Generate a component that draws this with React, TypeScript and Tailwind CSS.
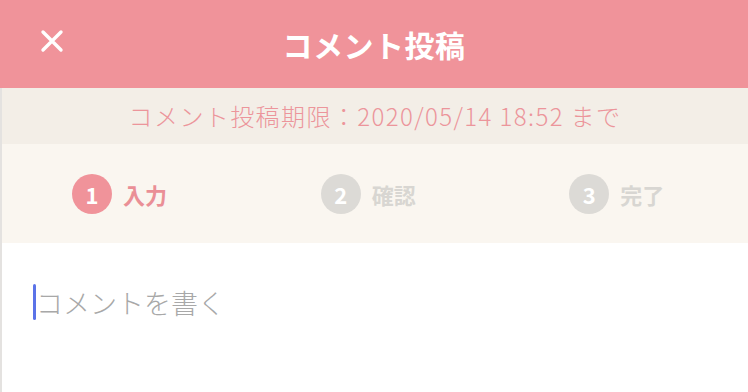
import React from 'react';

const font = { fontFamily: '"Noto Sans CJK JP", "Noto Sans", sans-serif' };

const steps = [
  { n: 1, label: '入力', active: true },
  { n: 2, label: '確認', active: false },
  { n: 3, label: '完了', active: false },
];

export default function App() {
  return (
    <div className="w-[748px] h-[392px] overflow-hidden bg-white" style={font}>
      {/* Header */}
      <header className="relative h-[88px] bg-[#f0939a] flex items-center justify-center">
        <button className="absolute left-[40px] top-[29px] w-[24px] h-[24px] flex items-center justify-center">
          <svg width="24" height="24" viewBox="0 0 24 24" fill="none" stroke="white" strokeWidth="3.4" strokeLinecap="round">
            <path d="M3 3 L21 21 M21 3 L3 21" />
          </svg>
        </button>
        <h1 className="text-white text-[30px] font-bold leading-none tracking-[0.5px]">コメント投稿</h1>
      </header>

      <div className="border-l-2 border-[#e4e2e0]">
        {/* Deadline */}
        <div className="h-[56px] bg-[#f3eee7] flex items-center justify-center">
          <p className="text-[#ec959b] text-[24px] font-light leading-none tracking-[1.4px]">
            コメント投稿期限：2020/05/14 18:52 まで
          </p>
        </div>

        {/* Steps */}
        <div className="h-[99px] bg-[#faf6f0] grid grid-cols-3">
          {steps.map((s) => (
            <div key={s.n} className="flex items-center gap-[11px] pl-[70px]">
              <span
                className={`w-[40px] h-[40px] rounded-full flex items-center justify-center text-white text-[22px] font-bold leading-none ${
                  s.active ? 'bg-[#f0939a]' : 'bg-[#dcdad6]'
                }`}
              >
                {s.n}
              </span>
              <span className={`text-[22px] font-bold leading-none ${s.active ? 'text-[#ea8f96]' : 'text-[#d8d6d2]'}`}>
                {s.label}
              </span>
            </div>
          ))}
        </div>

        {/* Input */}
        <div className="h-[149px] bg-white pt-[41px] pl-[31px]">
          <div className="flex items-center h-[36px]">
            <span className="w-[3px] h-[36px] rounded-sm bg-[#5b73e8]" />
            <span className="text-[27px] font-light leading-none text-[#a8a8a8]">コメントを書く</span>
          </div>
        </div>
      </div>
    </div>
  );
}
